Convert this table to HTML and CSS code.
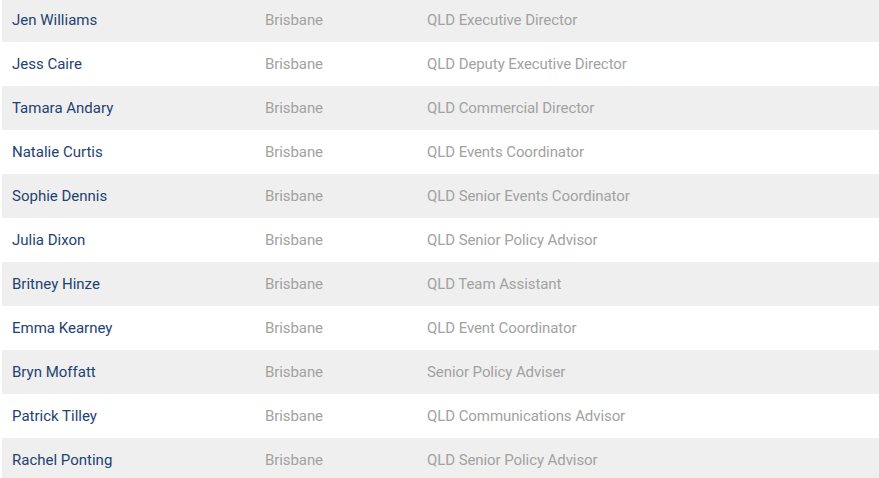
FILE: index.html
```html
<!DOCTYPE html>
<html>
<head>
<meta charset="utf-8">
<link rel="stylesheet" href="styles.css">
</head>
<body>
<div class="staff">
  <div class="row"><span class="name">Jen Williams</span><span class="loc">Brisbane</span><span class="role">QLD Executive Director</span></div>
  <div class="row"><span class="name">Jess Caire</span><span class="loc">Brisbane</span><span class="role">QLD Deputy Executive Director</span></div>
  <div class="row"><span class="name">Tamara Andary</span><span class="loc">Brisbane</span><span class="role">QLD Commercial Director</span></div>
  <div class="row"><span class="name">Natalie Curtis</span><span class="loc">Brisbane</span><span class="role">QLD Events Coordinator</span></div>
  <div class="row"><span class="name">Sophie Dennis</span><span class="loc">Brisbane</span><span class="role">QLD Senior Events Coordinator</span></div>
  <div class="row"><span class="name">Julia Dixon</span><span class="loc">Brisbane</span><span class="role">QLD Senior Policy Advisor</span></div>
  <div class="row"><span class="name">Britney Hinze</span><span class="loc">Brisbane</span><span class="role">QLD Team Assistant</span></div>
  <div class="row"><span class="name">Emma Kearney</span><span class="loc">Brisbane</span><span class="role">QLD Event Coordinator</span></div>
  <div class="row"><span class="name">Bryn Moffatt</span><span class="loc">Brisbane</span><span class="role">Senior Policy Adviser</span></div>
  <div class="row"><span class="name">Patrick Tilley</span><span class="loc">Brisbane</span><span class="role">QLD Communications Advisor</span></div>
  <div class="row"><span class="name">Rachel Ponting</span><span class="loc">Brisbane</span><span class="role">QLD Senior Policy Advisor</span></div>
</div>
</body>
</html>
```
FILE: styles.css
```css
html, body {
  margin: 0;
  padding: 0;
  background: #fff;
  overflow: hidden;
}
body {
  font-family: Roboto, "Liberation Sans", sans-serif;
  font-size: 15px;
}
.staff {
  margin: -2px 0 0 2px;
  display: flex;
  flex-direction: column;
}
.row {
  display: grid;
  grid-template-columns: 253px 162px 1fr;
  height: 44px;
  align-items: center;
}
.row:nth-child(odd) {
  background: #efefef;
}
.row span {
  padding-left: 10px;
}
.name {
  color: #1e4272;
}
.loc, .role {
  color: #a2a2a2;
  letter-spacing: -0.08px;
}
```
